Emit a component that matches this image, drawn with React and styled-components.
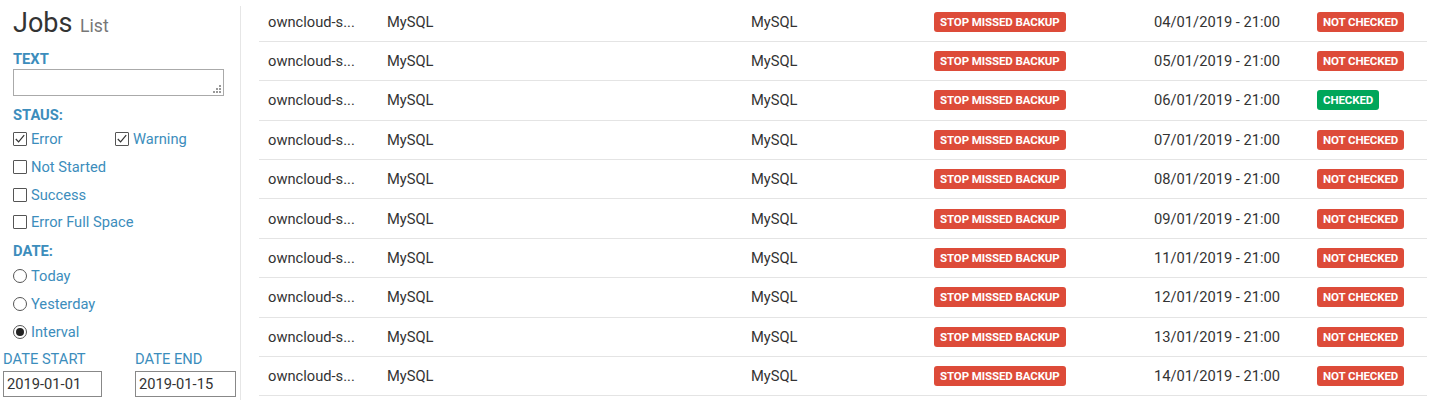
import React from 'react'
import styled, { createGlobalStyle } from 'styled-components'

const Global = createGlobalStyle`
  body {
    margin: 0;
    background: #fff;
    font-family: Roboto, "Liberation Sans", sans-serif;
    color: #333;
  }
`

const Page = styled.div`
  display: flex;
  width: 1440px;
  height: 400px;
  overflow: hidden;
`

const Sidebar = styled.div`
  width: 241px;
  flex-shrink: 0;
  border-right: 1px solid #e6e6e6;
  margin-top: 6px;
  box-sizing: border-box;
  display: flex;
  flex-direction: column;
`

const Title = styled.h1`
  margin: 2px 0 0 13px;
  font-size: 27px;
  font-weight: 400;
  line-height: 30px;
  height: 30px;
  color: #333;
  small {
    font-size: 17.6px;
    line-height: 1;
    color: #777;
    margin-left: 1px;
  }
`

const Label = styled.div`
  margin: ${p => p.mt || 0}px 0 0 13px;
  font-size: 14.7px;
  font-weight: 700;
  color: #3c8dbc;
  line-height: 17px;
`

const TextBox = styled.div`
  position: relative;
  margin: 1px 0 0 13px;
  width: 211px;
  height: 27px;
  box-sizing: border-box;
  border: 1px solid #aaa;
  background: #fff;
`

const Grip = styled.svg`
  position: absolute;
  right: 2px;
  bottom: 2px;
`

const OptionGrid = styled.div`
  display: grid;
  grid-template-columns: 102px 120px;
  margin: ${p => p.mt}px 0 0 13px;
  row-gap: 7.7px;
`

const Option = styled.label`
  display: flex;
  align-items: center;
  height: 20px;
  font-size: 14.7px;
  color: #3c8dbc;
  grid-column: ${p => (p.full ? '1 / 3' : 'auto')};
`

const Box = styled.span`
  width: 14px;
  height: 14px;
  box-sizing: border-box;
  border: 1px solid #555;
  border-radius: ${p => (p.round ? '50%' : '1px')};
  margin-right: 4px;
  display: flex;
  align-items: center;
  justify-content: center;
  background: #fff;
`

const Dot = styled.span`
  width: 8px;
  height: 8px;
  border-radius: 50%;
  background: #222;
`

const DateRow = styled.div`
  display: flex;
  gap: 33px;
  margin: 9.7px 0 0 3px;
`

const DateField = styled.div`
  display: flex;
  flex-direction: column;
`

const DateLabel = styled.div`
  font-size: 14.7px;
  color: #3c8dbc;
  line-height: 17px;
`

const DateInput = styled.div`
  width: ${p => p.w}px;
  height: 26px;
  box-sizing: border-box;
  border: 1px solid #888;
  margin-top: 2.3px;
  font-size: 14.7px;
  line-height: 17px;
  color: #333;
  padding: 4px 3px;
`

const Table = styled.div`
  margin: 2.4px 0 0 18px;
  width: 1168px;
`

const Row = styled.div`
  display: grid;
  grid-template-columns: 119px 364px 183px 220px 163px 119px;
  align-items: center;
  height: 39.4px;
  box-sizing: border-box;
  border-bottom: 1px solid #e4e4e4;
  padding-left: 9px;
  font-size: 14.7px;
  color: #333;
`

const Badge = styled.span`
  justify-self: start;
  display: inline-block;
  background: ${p => (p.ok ? '#00a65a' : '#dd4b39')};
  color: #fff;
  font-size: 11.5px;
  font-weight: 700;
  line-height: 12px;
  padding: 4px 6px;
  border-radius: 3px;
  letter-spacing: -0.1px;
`

const Check = () => (
  <svg width="12" height="12" viewBox="0 0 12 12">
    <path d="M1.8 6 L4.6 8.9 L10.2 2.2" fill="none" stroke="#333" strokeWidth="1.2" />
  </svg>
)

const rows = [
  ['04/01/2019', false],
  ['05/01/2019', false],
  ['06/01/2019', true],
  ['07/01/2019', false],
  ['08/01/2019', false],
  ['09/01/2019', false],
  ['11/01/2019', false],
  ['12/01/2019', false],
  ['13/01/2019', false],
  ['14/01/2019', false],
]

export default function App() {
  return (
    <Page>
      <Global />
      <Sidebar>
        <Title>Jobs <small>List</small></Title>
        <Label mt={13}>TEXT</Label>
        <TextBox>
          <Grip width="8" height="8" viewBox="0 0 8 8">
            <g fill="#999">
              <rect x="6" y="0" width="2" height="2" />
              <rect x="3" y="3" width="2" height="2" />
              <rect x="6" y="3" width="2" height="2" />
              <rect x="0" y="6" width="2" height="2" />
              <rect x="3" y="6" width="2" height="2" />
              <rect x="6" y="6" width="2" height="2" />
            </g>
          </Grip>
        </TextBox>
        <Label mt={11}>STAUS:</Label>
        <OptionGrid mt={5.3}>
          <Option><Box><Check /></Box>Error</Option>
          <Option><Box><Check /></Box>Warning</Option>
          <Option full><Box />Not Started</Option>
          <Option full><Box />Success</Option>
          <Option full><Box />Error Full Space</Option>
        </OptionGrid>
        <Label mt={10.7}>DATE:</Label>
        <OptionGrid mt={6.3}>
          <Option full><Box round />Today</Option>
          <Option full><Box round />Yesterday</Option>
          <Option full><Box round><Dot /></Box>Interval</Option>
        </OptionGrid>
        <DateRow>
          <DateField>
            <DateLabel>DATE START</DateLabel>
            <DateInput w={99}>2019-01-01</DateInput>
          </DateField>
          <DateField>
            <DateLabel>DATE END</DateLabel>
            <DateInput w={101}>2019-01-15</DateInput>
          </DateField>
        </DateRow>
      </Sidebar>
      <Table>
        {rows.map(([d, ok]) => (
          <Row key={d}>
            <span>owncloud-s...</span>
            <span>MySQL</span>
            <span>MySQL</span>
            <Badge>STOP MISSED BACKUP</Badge>
            <span>{d} - 21:00</span>
            <Badge ok={ok}>{ok ? 'CHECKED' : 'NOT CHECKED'}</Badge>
          </Row>
        ))}
      </Table>
    </Page>
  )
}
